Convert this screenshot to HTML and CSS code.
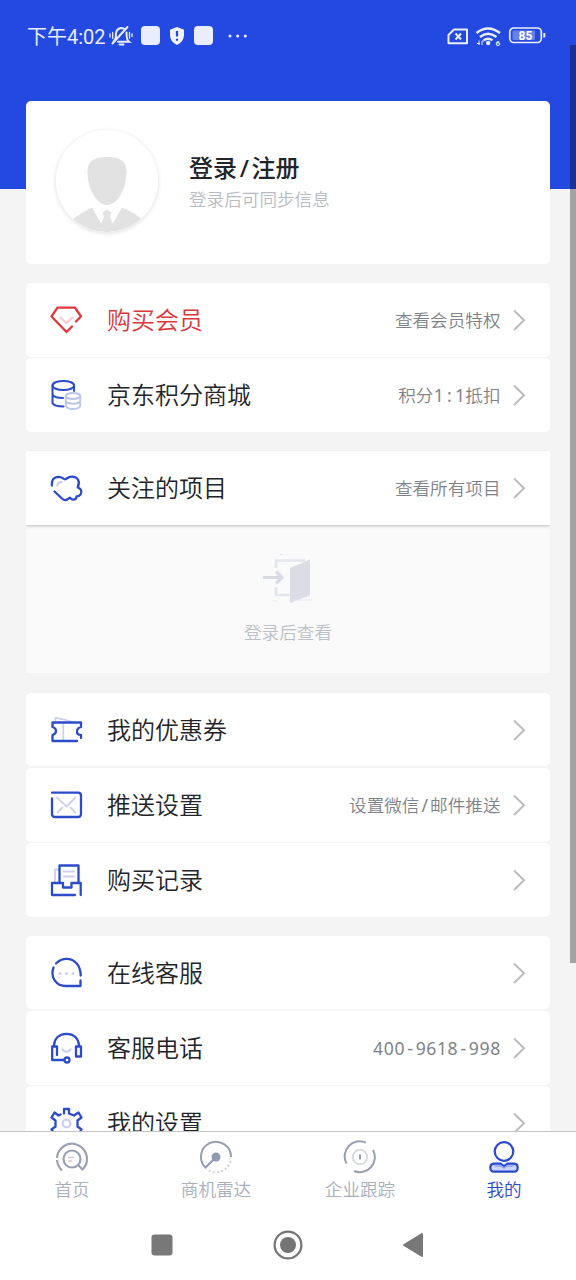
FILE: index.html
```html
<!DOCTYPE html>
<html lang="zh-CN">
<head>
<meta charset="utf-8">
<title>我的</title>
<link rel="stylesheet" href="styles.css">
</head>
<body>
<div class="phone">
  <header class="status">
    <span class="clock">下午4:02</span>
    <svg class="mute" width="26" height="24" viewBox="0 0 26 24" fill="none" stroke="#e9edfc" stroke-width="2" stroke-linecap="round">
      <path d="M5.500 17.500Q8 15.500 8 10Q8 5 13 4Q15 4 16.500 5M18.500 8.500Q18.500 16 21 17.800H10M4.500 19.500 19.500 3"/>
      <path d="M11.500 20.500H15.500" stroke-width="2"/>
      <path d="M2 10V13M4.700 8.500V14.500M21.500 8.500V14M24 10V12.500" stroke-width="1.300"/>
    </svg>
    <i class="app-dot"></i>
    <svg class="shield" width="16" height="20" viewBox="0 0 16 20"><path d="M8 1 15 3.700V9Q15 15.500 8 19Q1 15.500 1 9V3.700Z" fill="#f0f3fd"/><path d="M8 5V10.500M8 12.700V14.700" stroke="#2349e1" stroke-width="2.200"/></svg>
    <i class="app-dot"></i>
    <svg class="more" width="20" height="4" viewBox="0 0 20 4" fill="#e9edfc"><circle cx="2" cy="2" r="1.500"/><circle cx="9.700" cy="2" r="1.500"/><circle cx="17.300" cy="2" r="1.500"/></svg>
    <svg class="signals" width="102" height="26" viewBox="0 0 102 26" fill="none" stroke="#e9edfc">
      <path d="M10 6.500H23V20.200H4.500V12Z" stroke-width="2" stroke-linejoin="round"/>
      <path d="M11.500 10.500 17 16.500M17 10.500 11.500 16.500" stroke-width="2"/>
      <g stroke-width="2.400"><path d="M32.500 10Q44 1 56 10"/><path d="M36 14Q44 7.500 52.500 14"/><path d="M39.700 17.300Q44 14 48.500 17.300"/></g>
      <circle cx="44.200" cy="20" r="2.200" fill="#e9edfc" stroke="none"/>
      <path d="M35 17.500V22M32.800 20.500H36M38 22V18H40" stroke-width="1"/>
      <text x="51.500" y="23" class="wifi-gen">6</text>
      <rect x="65.800" y="5" width="31.500" height="14.500" rx="4" stroke-width="1.700"/>
      <rect x="68.500" y="7.500" width="22.500" height="9.500" rx="1.500" fill="#6680ea" stroke="none"/>
      <path d="M100.300 10V14.500" stroke-width="2"/>
      <text x="81.500" y="16.500" class="charge">85</text>
    </svg>
  </header>

  <main class="content">
    <section class="profile">
      <svg class="avatar" width="102" height="102" viewBox="1 1 102 102">
        <defs><clipPath id="disc"><circle cx="52" cy="52" r="51"/></clipPath></defs>
        <circle cx="52" cy="52" r="51" fill="#fff"/>
        <g clip-path="url(#disc)" fill="#e2e2e2">
          <path d="M52 28C64 28 71 31 71.500 42C72 56 64 76 52 76C40 76 32 56 32.500 42C33 31 40 28 52 28Z"/>
          <path d="M37 78.500 46.500 95 49 88.500 47.500 83.500 52 80.500 56.500 83.500 55 88.500 57.500 95 67 78.500C73 81 80 84 88 92V104H15V93C22 86 30 82 37 78.500Z"/>
          <path d="m49.500 87-3.500 8 3 8h6l3-8-3.500-8z"/>
        </g>
      </svg>
      <div class="who"><h1>登录<span class="mono">/</span>注册</h1><p>登录后可同步信息</p></div>
    </section>

    <section class="group">
      <div class="row vip">
        <svg class="icon red" viewBox="0 0 36 36"><path d="M28 19.500 33 14.500 27 5.700H9.500L3.500 14.500 18.500 30 24 24.500"/><path class="pale" d="m12.500 15.500 6 5.500 6-5.500"/></svg>
        <span class="label">购买会员</span><span class="hint">查看会员特权</span><svg class="chev" viewBox="0 0 14 22"><path d="m2 1.500 10 9.700L2 21"/></svg>
      </div>
      <div class="row">
        <svg class="icon thin" viewBox="0 0 36 36"><ellipse cx="15.300" cy="8.500" rx="10.800" ry="4.600"/><path d="M4.500 8.500V26Q6 29.500 15.500 29.500M4.500 17.500Q6 21 15 21M26.100 8.500V14"/><g class="lav coin"><ellipse cx="25" cy="19" rx="7.200" ry="2.900"/><path d="M17.800 19V29Q19 32 25 32T32.200 29V19M17.800 24Q19 26.700 25 26.700T32.200 24"/></g></svg>
        <span class="label">京东积分商城</span><span class="hint">积分<span class="mono">1</span><span class="mono">:</span><span class="mono">1</span>抵扣</span><svg class="chev" viewBox="0 0 14 22"><path d="m2 1.500 10 9.700L2 21"/></svg>
      </div>
    </section>

    <section class="group followed">
      <div class="row">
        <svg class="icon" viewBox="0 0 36 36"><path d="M3.900 15.500C3.500 11 5 6.800 11 6.800C14 6.800 15.500 9.300 17 9.300S19.500 6.700 24 6.700C30 6.700 32.500 12 29.700 17.300C33 18.500 34.500 21.500 32.500 24.500Q31 26.500 28.500 26.500C28.500 29.500 25 31 22 27.700C20 29.500 17 31.300 14.500 29L6.500 21.500"/><path class="lav" d="M9.500 15.500Q9.500 12 13.500 12.200"/></svg>
        <span class="label">关注的项目</span><span class="hint">查看所有项目</span><svg class="chev" viewBox="0 0 14 22"><path d="m2 1.500 10 9.700L2 21"/></svg>
      </div>
      <div class="empty">
        <svg width="56" height="54" viewBox="0 0 56 54" fill="none" stroke="#e3e5ec" stroke-width="2.500">
          <path d="M45 7.500H16V15M16 34V42H30"/>
          <path d="m30 15 20-8.500v36L30 50z" fill="#dadde6" stroke="none"/>
          <path d="M3 24.500H20M16 18.500 22 24.500 16 30.500" stroke="#d8dbe4" stroke-width="3.200"/>
          <path d="M20 1.500h3M12 48h5M33 47h19" stroke-width="1"/>
        </svg>
        <p>登录后查看</p>
      </div>
    </section>

    <section class="group">
      <div class="row">
        <svg class="icon" viewBox="0 0 36 36"><path class="lav thinner" d="M7.500 9V5.500L23 9.500M15.300 11V28" stroke-dasharray="3 .8"/><path d="M29 29H4.500V23Q8 22 8 19T4.500 15V10.500H33V15Q29 16 29 19.500T33 23V26"/></svg>
        <span class="label">我的优惠券</span><svg class="chev" viewBox="0 0 14 22"><path d="m2 1.500 10 9.700L2 21"/></svg>
      </div>
      <div class="row">
        <svg class="icon" viewBox="0 0 36 36"><path d="M4 5.700H30Q33 5.700 33 8.700V27Q33 30 30 30H7Q4 30 4 27V11.500"/><path class="lav thinner" d="m9 10.500 9.500 9 9-9M9.500 25.500l5-5M27.500 25.500l-5-5"/></svg>
        <span class="label">推送设置</span><span class="hint">设置微信<span class="mono">/</span>邮件推送</span><svg class="chev" viewBox="0 0 14 22"><path d="m2 1.500 10 9.700L2 21"/></svg>
      </div>
      <div class="row">
        <svg class="icon" viewBox="0 0 36 36"><path class="lav thinner" d="M11 7.500H7V20M15.500 9.500H26M15.500 14.500H26"/><path d="M11.500 20V3.500H30.500V20M32.700 33V21H23.500V25.500H15V21H4V33H27"/></svg>
        <span class="label">购买记录</span><svg class="chev" viewBox="0 0 14 22"><path d="m2 1.500 10 9.700L2 21"/></svg>
      </div>
    </section>

    <section class="group">
      <div class="row">
        <svg class="icon" viewBox="0 0 36 36"><path d="M8 8.500Q12.500 3.800 18.500 3.800C27 3.800 32.700 11 32.700 20.500M5.500 12.500C2 22 8 31 18 31H32.500V25.500"/><g class="dots"><circle cx="12" cy="18.500" r="1.500"/><circle cx="18.500" cy="18.500" r="1.500"/><circle cx="25" cy="18.500" r="1.500"/></g></svg>
        <span class="label">在线客服</span><svg class="chev" viewBox="0 0 14 22"><path d="m2 1.500 10 9.700L2 21"/></svg>
      </div>
      <div class="row">
        <svg class="icon" viewBox="0 0 36 36"><path d="M6 15.500C6.500 8 11.500 3.800 18.500 3.800S30.500 8 31 15.500M9 25V16.500H4.200V30H16M28 16.500H33V26.500H28Z"/><circle cx="19" cy="30" r="2.500"/><path class="lav" d="M14.500 19.500Q18.500 24.500 22.500 19.500"/></svg>
        <span class="label">客服电话</span><span class="hint"><span class="mono">4</span><span class="mono">0</span><span class="mono">0</span><span class="mono">-</span><span class="mono">9</span><span class="mono">6</span><span class="mono">1</span><span class="mono">8</span><span class="mono">-</span><span class="mono">9</span><span class="mono">9</span><span class="mono">8</span></span><svg class="chev" viewBox="0 0 14 22"><path d="m2 1.500 10 9.700L2 21"/></svg>
      </div>
      <div class="row">
        <svg class="icon" viewBox="0 0 36 36"><path d="M12.500 9.500 10.500 10.500 6.500 7.500 3.500 12.500 7.500 15.500V21.500L3.500 24.500 6.500 29.500 11 27 16 30V33.500H21V30L26 27 30.500 29.500 33.500 24.500 29.500 21.500V15.500L33.500 12.500 30.500 7.500 26 10.500 21 8.500V4H16V8.500"/><circle class="lav" cx="18.500" cy="18.500" r="3.800"/></svg>
        <span class="label">我的设置</span><svg class="chev" viewBox="0 0 14 22"><path d="m2 1.500 10 9.700L2 21"/></svg>
      </div>
    </section>
  </main>

  <nav class="tabs">
    <div class="tab">
      <svg viewBox="0 0 36 36" fill="none" stroke="#9aa1b3" stroke-width="2.200"><path d="M3 18A15 15 0 1 1 28.500 29.500L24.500 25.500M3 20Q3.500 26 8 30.500"/><circle cx="18" cy="19" r="8.500"/><path d="M14 17.500h6M14 21h4" stroke="#d6c9dd" stroke-width="1.300"/></svg>
      <span>首页</span>
    </div>
    <div class="tab">
      <svg viewBox="0 0 36 36" fill="none" stroke="#969db1" stroke-width="2"><path d="M33 17A15 15 0 1 0 7.500 27.500L18 17"/><circle cx="18" cy="17" r="4.500" fill="#929ab1" stroke="none"/><path d="M11 30.500A15 15 0 0 0 33 19" stroke="#c8cbd4" stroke-dasharray="1.700 2.500"/></svg>
      <span>商机雷达</span>
    </div>
    <div class="tab">
      <svg viewBox="0 0 36 36" fill="none" stroke="#9a9fb0" stroke-width="2"><path d="M24 2.700A15 15 0 0 0 4.500 23.500M31 10A15 15 0 0 1 12 31"/><circle cx="18" cy="17" r="7.200" stroke="#d9dbe2"/><path d="M18 14.500v5"/></svg>
      <span>企业跟踪</span>
    </div>
    <div class="tab active">
      <svg viewBox="0 0 36 36" fill="none" stroke="#2c48cb" stroke-width="2.200"><circle cx="18" cy="11.500" r="9.300"/><path d="M8.500 23.700H14.500L18 26.200 21.500 23.700H27.500Q31.700 23.700 31.700 27.700T27.500 31.700H8.500Q4.300 31.700 4.300 27.700T8.500 23.700Z" fill="#c9d6fb"/><path d="M8.500 26H15L18 28 21 26H27.500" stroke="#8ba3ee" stroke-width="1.500"/></svg>
      <span>我的</span>
    </div>
  </nav>
  <footer class="keys">
    <svg width="22" height="22" viewBox="0 0 22 22"><rect x=".5" y=".5" width="21" height="21" rx="3" fill="#787878"/></svg>
    <svg width="30" height="30" viewBox="0 0 30 30"><circle cx="15" cy="15" r="13.400" fill="none" stroke="#747474" stroke-width="2.200"/><circle cx="15" cy="15" r="8" fill="#747474"/></svg>
    <svg width="22" height="26" viewBox="0 0 22 26"><path d="M2 13 20 2v22z" fill="#787878" stroke="#787878" stroke-width="2" stroke-linejoin="round"/></svg>
  </footer>
  <div class="scrollbar"></div>
</div>
</body>
</html>
```
FILE: styles.css
```css
* { box-sizing: border-box; margin: 0; padding: 0; }
body { font-family: "Noto Sans CJK SC", sans-serif; font-weight: 350; }
svg { display: block; flex: none; }
.phone {
  position: relative;
  width: 576px;
  height: 1280px;
  overflow: hidden;
  display: flex;
  flex-direction: column;
  background: linear-gradient(#2349e1 189px, #f4f4f4 189px);
}

.status { height: 72px; padding: 0 30px 1px 27px; display: flex; align-items: center; flex: none; color: #e9edfc; }
.clock { width: 81px; padding-top: 2px; font: 400 20px/28px Roboto, "Noto Sans CJK SC", sans-serif; white-space: nowrap; }
.app-dot { width: 19px; height: 19px; border-radius: 4px; background: #e9edfc; }
.mute { margin-right: 7px; }
.shield { margin: 0 9px; }
.more { margin-left: 15px; }
.signals { margin-left: auto; }
.wifi-gen { font: 700 8px Roboto, sans-serif; fill: #e9edfc; stroke: none; }
.charge { font: 700 12px Roboto, sans-serif; fill: #fff; stroke: none; text-anchor: middle; }

.content { flex: 1; min-height: 0; overflow: hidden; padding: 29px 26px 0; display: flex; flex-direction: column; gap: 19px; }
.profile { height: 163px; flex: none; background: #fff; border-radius: 5px; display: flex; align-items: center; padding: 0 30px 4px; gap: 31px; }
.avatar { border-radius: 50%; box-shadow: 0 1px 5px rgba(0, 0, 0, .14); }
.who h1 { font-size: 24px; line-height: 34px; font-weight: 500; color: #222429; }
.who p { font-size: 17.600px; line-height: 27px; margin-top: 1px; color: #b9bbc4; }
.mono { display: inline-block; width: .605em; text-align: center; font-family: "Noto Sans", "Noto Sans CJK SC", sans-serif; font-weight: 400; line-height: 1; }
h1 .mono { font-weight: 500; }

.group { flex: none; display: flex; flex-direction: column; gap: 1.600px; }
.row { height: 73.600px; background: #fff; border-radius: 5px; display: flex; align-items: center; padding: 0 24px 0 22px; }
.label { font-size: 24px; line-height: 36px; color: #222429; margin-left: 23px; margin-right: auto; padding-bottom: 2px; }
.vip .label { color: #d8383c; }
.hint { font-size: 17.600px; line-height: 26px; color: #808289; white-space: nowrap; }
.chev { width: 14px; height: 22px; margin-left: 11.500px; fill: none; stroke: #bdbdbd; stroke-width: 2; }
.icon { width: 36px; height: 36px; fill: none; stroke: #2c4bc8; stroke-width: 2.300; stroke-linejoin: round; stroke-linecap: round; }
.icon.thin { stroke-width: 2; }
.icon.red { stroke: #df383d; }
.pale { stroke: #f5ccd2; }
.lav { stroke: #cfd0ef; }
.coin { stroke: #bcc7e9; }
.thinner { stroke-width: 1.800; }
.dots { fill: #d3ceec; stroke: none; }

.followed { gap: 0; margin-bottom: 1px; }
.followed .row { position: relative; height: 74px; border-radius: 0; box-shadow: 0 1px 3px rgba(0, 0, 0, .25); clip-path: inset(0 0 -5px 0); }
.empty { height: 148px; background: #fafafa; display: flex; flex-direction: column; align-items: center; padding-top: 28px; }
.empty p { font-size: 17.600px; line-height: 26px; color: #bdbfc8; margin-top: 12px; }

.tabs { flex: none; height: 80px; background: #fff; border-top: 1px solid #c4c4c4; display: flex; }
.tab { width: 25%; display: flex; flex-direction: column; align-items: center; padding-top: 8px; font-size: 17.600px; line-height: 26px; color: #a9afbc; }
.tab svg { width: 36px; height: 36px; }
.active { color: #2c48cb; }
.keys { flex: none; height: 69px; background: #fff; display: flex; align-items: center; padding: 0 0 1px 150.500px; }
.keys svg:nth-child(2) { margin: 0 99px 0 100px; }
.scrollbar { position: absolute; right: 0; top: 45px; width: 6px; height: 918px; background: rgba(0, 0, 0, .33); }
```
